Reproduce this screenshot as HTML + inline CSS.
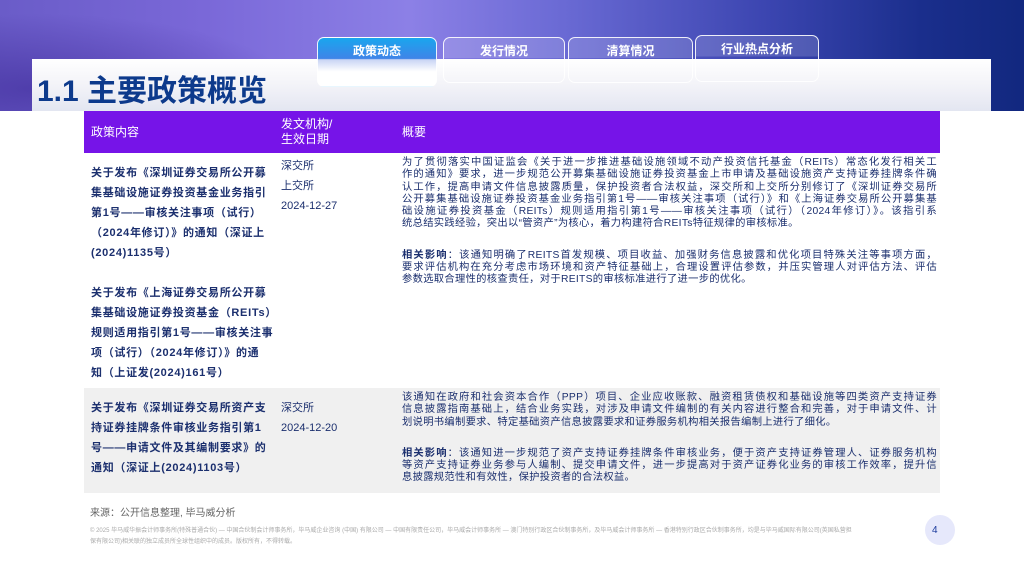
<!DOCTYPE html>
<html><head><meta charset="utf-8"><style>
*{margin:0;padding:0;box-sizing:border-box}
body{width:1024px;height:576px;position:relative;overflow:hidden;background:#fff;font-family:"Liberation Sans","Noto Sans CJK SC",sans-serif;color:#1b2f6e}
.band{position:absolute;left:0;top:0;width:1024px;height:111px;background:linear-gradient(90deg,#6a5cc8 0%,#7a68d8 20%,#8c80e6 40%,#6a6ad4 55%,#3b45b0 75%,#1a2e8c 90%,#12287f 100%)}
.band2{position:absolute;left:0;top:0;width:340px;height:111px;background:radial-gradient(ellipse at 10% 80%,rgba(60,40,150,.6),rgba(0,0,0,0) 60%)}
.panel{position:absolute;left:32px;top:59px;width:959px;height:52px;background:linear-gradient(180deg,#fff 0%,#f3f3f8 50%,#e3e6f1 100%)}
.title{position:absolute;left:37px;top:66px;font-size:30px;font-weight:bold;color:#0d3a8c}
.tab{position:absolute;border:1.5px solid rgba(255,255,255,.9);border-radius:7px;color:#fff;font-size:12px;font-weight:bold;text-align:center;padding-top:4px;background:linear-gradient(180deg,rgba(255,255,255,.15) 0%,rgba(255,255,255,.15) 45%,rgba(255,255,255,0) 46%)}
.tab.act{background:linear-gradient(180deg,#1aa6ee 0%,#3f84e8 43%,#c8d4f4 45%,#fff 70%,#fff 100%)}
table{position:absolute;left:84px;top:111px;width:856px;border-collapse:collapse;table-layout:fixed}
th{background:#7614e8;color:#fff;font-weight:normal;font-size:12px;text-align:left;height:42px;line-height:15px;vertical-align:middle}
td{vertical-align:top}
.c1{font-weight:bold;font-size:11px;line-height:20px;padding:10px 0 0 7px;letter-spacing:0.7px;white-space:nowrap;overflow:visible}
.c2{font-size:11px;line-height:20px;padding:3px 0 0 0;color:#1b2f6e}
.c3{font-size:10.3px;line-height:12.3px;padding:4px 3px 0 7px;letter-spacing:0.3px}
.c3 div{text-align-last:justify;white-space:nowrap}
.c3 div.l{text-align-last:left}
.gap{height:19px}
.r2 td{background:#f0f0f0}
.src{position:absolute;left:90px;top:504px;font-size:10px;color:#666}
.copy{position:absolute;left:90px;top:526px;width:830px;font-size:6px;line-height:11px;color:#aaa}
.pg{position:absolute;left:925px;top:515px;width:30px;height:30px;border-radius:50%;background:#e6e8fb}
.pgn{position:absolute;left:932px;top:525px;font-size:10px;color:#1b3a9c}
</style></head><body>
<div class="band"></div><div class="band2"></div>
<div class="panel"></div>
<div class="title">1.1 主要政策概览</div>
<div class="tab act" style="left:317px;top:37px;width:120px;height:50px">政策动态</div>
<div class="tab" style="left:443px;top:37px;width:122px;height:46px">发行情况</div>
<div class="tab" style="left:568px;top:37px;width:125px;height:46px">清算情况</div>
<div class="tab" style="left:695px;top:35px;width:124px;height:47px">行业热点分析</div>
<table>
<colgroup><col style="width:197px"><col style="width:114px"><col></colgroup>
<tr><th style="padding-left:7px">政策内容</th><th style="padding-left:0">发文机构/<br>生效日期</th><th style="padding-left:7px">概要</th></tr>
<tr style="height:235px"><td class="c1">关于发布《深圳证券交易所公开募<br>集基础设施证券投资基金业务指引<br>第1号——审核关注事项（试行）<br>（2024年修订）》的通知（深证上<br>(2024)1135号）<div style="height:20px"></div>关于发布《上海证券交易所公开募<br>集基础设施证券投资基金（REITs）<br>规则适用指引第1号——审核关注事<br>项（试行）（2024年修订）》的通<br>知（上证发(2024)161号）</td>
<td class="c2">深交所<br>上交所<br>2024-12-27</td>
<td class="c3">
<div>为了贯彻落实中国证监会《关于进一步推进基础设施领域不动产投资信托基金（REITs）常态化发行相关工</div>
<div>作的通知》要求，进一步规范公开募集基础设施证券投资基金上市申请及基础设施资产支持证券挂牌条件确</div>
<div>认工作，提高申请文件信息披露质量，保护投资者合法权益，深交所和上交所分别修订了《深圳证券交易所</div>
<div>公开募集基础设施证券投资基金业务指引第1号——审核关注事项（试行）》和《上海证券交易所公开募集基</div>
<div>础设施证券投资基金（REITs）规则适用指引第1号——审核关注事项（试行）（2024年修订）》。该指引系</div>
<div class="l">统总结实践经验，突出以“管资产”为核心，着力构建符合REITs特征规律的审核标准。</div>
<div class="gap"></div>
<div><b>相关影响</b>：该通知明确了REITS首发规模、项目收益、加强财务信息披露和优化项目特殊关注等事项方面，</div>
<div>要求评估机构在充分考虑市场环境和资产特征基础上，合理设置评估参数，并压实管理人对评估方法、评估</div>
<div class="l">参数选取合理性的核查责任，对于REITS的审核标准进行了进一步的优化。</div>
</td></tr>
<tr class="r2" style="height:105px"><td class="c1" style="padding-top:10px">关于发布《深圳证券交易所资产支<br>持证券挂牌条件审核业务指引第1<br>号——申请文件及其编制要求》的<br>通知（深证上(2024)1103号）</td>
<td class="c2" style="padding-top:10px">深交所<br>2024-12-20</td>
<td class="c3">
<div>该通知在政府和社会资本合作（PPP）项目、企业应收账款、融资租赁债权和基础设施等四类资产支持证券</div>
<div>信息披露指南基础上，结合业务实践，对涉及申请文件编制的有关内容进行整合和完善，对于申请文件、计</div>
<div class="l">划说明书编制要求、特定基础资产信息披露要求和证券服务机构相关报告编制上进行了细化。</div>
<div class="gap"></div>
<div><b>相关影响</b>：该通知进一步规范了资产支持证券挂牌条件审核业务，便于资产支持证券管理人、证券服务机构</div>
<div>等资产支持证券业务参与人编制、提交申请文件，进一步提高对于资产证券化业务的审核工作效率，提升信</div>
<div class="l">息披露规范性和有效性，保护投资者的合法权益。</div>
</td></tr>
</table>
<div class="src">来源：公开信息整理, 毕马威分析</div>
<div class="copy">© 2025 毕马威华振会计师事务所(特殊普通合伙) — 中国合伙制会计师事务所，毕马威企业咨询 (中国) 有限公司 — 中国有限责任公司，毕马威会计师事务所 — 澳门特别行政区合伙制事务所，及毕马威会计师事务所 — 香港特别行政区合伙制事务所，均是与毕马威国际有限公司(英国私营担<br>保有限公司)相关联的独立成员所全球性组织中的成员。版权所有，不得转载。</div>
<div class="pg"></div><div class="pgn">4</div>
</body></html>
